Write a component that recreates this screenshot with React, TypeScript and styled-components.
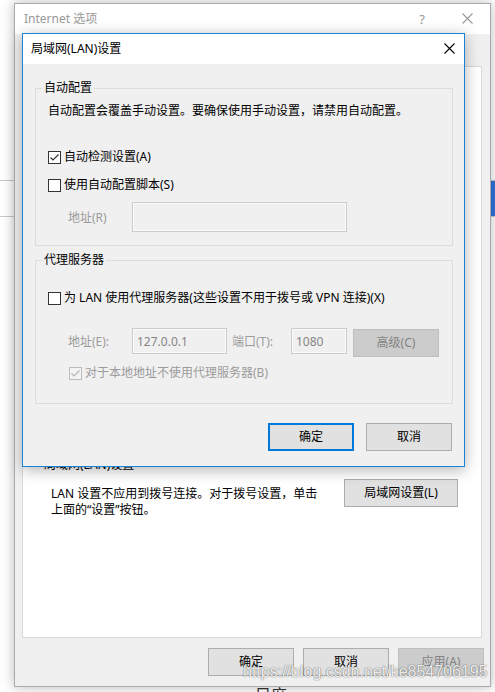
import styled, { createGlobalStyle } from 'styled-components';

const GlobalStyle = createGlobalStyle`
  html, body {
    margin: 0;
    padding: 0;
    background: #fff;
  }
  body {
    width: 495px;
    height: 692px;
    overflow: hidden;
    font-family: "Noto Sans", "Noto Sans CJK SC", sans-serif;
    font-size: 12px;
    color: #000;
  }
  * {
    box-sizing: border-box;
  }
`;

const Page = styled.div`
  position: relative;
  width: 495px;
  height: 692px;
  overflow: hidden;
  background: #fff;
`;

/* the web page behind the windows */
const BackdropBand = styled.div`
  margin-top: 180px;
  height: 37px;
  border-top: 1px solid #c8c8c8;
  border-bottom: 1px solid #c8c8c8;
  display: flex;
  justify-content: flex-end;
`;

const BackdropTab = styled.div`
  width: 5px;
  background: #2f72dc;
`;

const BackdropText = styled.div`
  margin: 468px 0 0 255px;
  font-size: 16px;
  line-height: 20px;
  color: #333;
`;

/* Internet options window */
const Window = styled.div`
  position: absolute;
  left: 14px;
  top: 3px;
  width: 477px;
  height: 684px;
  border: 1px solid #aaaaaa;
  background: #f0f0f0;
  box-shadow: 0 0 12px rgba(0, 0, 0, 0.28);
  display: flex;
  flex-direction: column;
`;

const WindowTitleBar = styled.div`
  height: 30px;
  flex: none;
  background: #fff;
  display: flex;
  align-items: center;
  padding: 0 17px 1px 9px;
  color: #999;
`;

const WindowTitle = styled.div`
  flex: 1;
  line-height: 16px;
`;

const HelpGlyph = styled.span`
  margin-right: 37px;
  font-size: 13px;
  line-height: 16px;
  color: #999;
`;

const WindowBody = styled.div`
  flex: 1;
  display: flex;
  flex-direction: column;
  padding: 0 8px 0 7px;
`;

const TabStrip = styled.div`
  height: 32px;
  flex: none;
`;

const TabPanel = styled.div`
  height: 572px;
  flex: none;
  background: #fff;
  border: 1px solid #d9d9d9;
  display: flex;
  flex-direction: column;
`;

const LanHeading = styled.div`
  margin: 390px 0 0 21px;
  line-height: 16px;
`;

const LanRow = styled.div`
  margin-top: 6px;
  padding: 0 23px 0 28px;
  display: flex;
  justify-content: space-between;
  align-items: flex-start;
`;

const LanText = styled.div`
  margin-top: 7px;
  line-height: 16px;
`;

const WindowFooter = styled.div`
  margin: 10px -2px 0 0;
  display: flex;
  justify-content: flex-end;
  gap: 9px;
`;

/* LAN settings dialog */
const Dialog = styled.div`
  position: absolute;
  left: 7px;
  top: 29px;
  width: 443px;
  border: 1px solid #1883d7;
  background: #f0f0f0;
  box-shadow: 0 3px 14px rgba(0, 0, 0, 0.3);
`;

const DialogTitleBar = styled.div`
  height: 30px;
  background: #fff;
  display: flex;
  align-items: center;
  justify-content: space-between;
  padding: 0 9px 1px 8px;
  line-height: 16px;
`;

const DialogBody = styled.div`
  padding: 16px 11px 15px 12px;
`;

const Group = styled.fieldset<{ $bottom: number; $top?: number }>`
  margin: ${(p) => p.$top ?? 0}px 0 0;
  padding: 0 12px ${(p) => p.$bottom}px;
  border: 1px solid #dcdcdc;
  min-width: 0;
`;

const GroupLegend = styled.legend`
  padding: 0 2px;
  margin-left: -6px;
  line-height: 16px;
`;

const Description = styled.div`
  margin-top: 6px;
  line-height: 18px;
`;

const CheckRow = styled.div<{ $top: number; $indent?: number; $disabled?: boolean }>`
  margin-top: ${(p) => p.$top}px;
  padding-left: ${(p) => p.$indent ?? 0}px;
  height: 18px;
  display: flex;
  align-items: center;
  gap: 3px;
  color: ${(p) => (p.$disabled ? '#9b9b9b' : '#000')};
  line-height: 18px;
`;

const Box = styled.span<{ $disabled?: boolean }>`
  width: 13px;
  height: 13px;
  flex: none;
  border: 1px solid ${(p) => (p.$disabled ? '#bcbcbc' : '#333')};
  background: ${(p) => (p.$disabled ? '#f3f3f3' : '#fff')};
  display: flex;
  align-items: center;
  justify-content: center;
`;

const FieldRow = styled.div<{ $top: number }>`
  margin-top: ${(p) => p.$top}px;
  padding-left: 20px;
  display: flex;
  align-items: flex-start;
`;

const FieldLabel = styled.span<{ $width: number; $gap?: number; $height: number }>`
  width: ${(p) => p.$width}px;
  margin-left: ${(p) => p.$gap ?? 0}px;
  height: ${(p) => p.$height}px;
  display: flex;
  align-items: center;
  color: #9b9b9b;
  flex: none;
`;

const TextBox = styled.div<{ $width: number; $height: number }>`
  width: ${(p) => p.$width}px;
  height: ${(p) => p.$height}px;
  flex: none;
  border: 1px solid #cccccc;
  box-shadow: inset 0 0 0 1px #fafafa;
  background: #f0f0f0;
  padding: 0 4px;
  display: flex;
  align-items: center;
  color: #858585;
`;

const ButtonRow = styled.div`
  margin-top: 19px;
  padding-right: 1px;
  display: flex;
  justify-content: flex-end;
  gap: 12px;
`;

const Button = styled.button<{ $primary?: boolean; $width?: number; $gap?: number; $nudge?: number }>`
  width: ${(p) => p.$width ?? 86}px;
  height: 28px;
  flex: none;
  margin: ${(p) => p.$nudge ?? 0}px 0 0 ${(p) => p.$gap ?? 0}px;
  padding: 0;
  font: inherit;
  line-height: 16px;
  color: #000;
  background: #e1e1e1;
  border: ${(p) => (p.$primary ? '2px solid #0078d7' : '1px solid #adadad')};
  &:disabled {
    background: #cccccc;
    border-color: #bfbfbf;
    color: #838383;
  }
`;

const Watermark = styled.div`
  position: absolute;
  left: 243px;
  top: 662px;
  font-family: "Liberation Sans", Arial, sans-serif;
  font-size: 16px;
  line-height: 20px;
  color: rgba(255, 255, 255, 0.9);
  text-shadow: 0 0 1px rgba(0, 0, 0, 0.55), 0 0 2px rgba(0, 0, 0, 0.25);
  pointer-events: none;
`;

function CloseIcon({ color }: { color: string }) {
  return (
    <svg width="11" height="11" viewBox="0 0 11 11">
      <path d="M0.5 0.5 L10.5 10.5 M10.5 0.5 L0.5 10.5" stroke={color} strokeWidth="1.1" fill="none" />
    </svg>
  );
}

function CheckBox({ checked, disabled }: { checked?: boolean; disabled?: boolean }) {
  return (
    <Box $disabled={disabled}>
      {checked && (
        <svg width="11" height="11" viewBox="0 0 11 11">
          <path
            d="M1.5 5.5 L4 8 L9.5 2.5"
            stroke={disabled ? '#b5b5b5' : '#333'}
            strokeWidth="1.2"
            fill="none"
          />
        </svg>
      )}
    </Box>
  );
}

export default function App() {
  return (
    <>
      <GlobalStyle />
      <Page>
        <BackdropBand>
          <BackdropTab />
        </BackdropBand>
        <BackdropText>目度</BackdropText>

        <Window>
          <WindowTitleBar>
            <WindowTitle>Internet 选项</WindowTitle>
            <HelpGlyph>?</HelpGlyph>
            <CloseIcon color="#999" />
          </WindowTitleBar>
          <WindowBody>
            <TabStrip />
            <TabPanel>
              <LanHeading>局域网(LAN)设置</LanHeading>
              <LanRow>
                <LanText>
                  LAN 设置不应用到拨号连接。对于拨号设置，单击
                  <br />
                  上面的“设置”按钮。
                </LanText>
                <Button $width={114}>局域网设置(L)</Button>
              </LanRow>
            </TabPanel>
            <WindowFooter>
              <Button>确定</Button>
              <Button>取消</Button>
              <Button disabled>应用(A)</Button>
            </WindowFooter>
          </WindowBody>

          <Dialog>
            <DialogTitleBar>
              <span>局域网(LAN)设置</span>
              <CloseIcon color="#000" />
            </DialogTitleBar>
            <DialogBody>
              <Group $bottom={13}>
                <GroupLegend>自动配置</GroupLegend>
                <Description>自动配置会覆盖手动设置。要确保使用手动设置，请禁用自动配置。</Description>
                <CheckRow $top={28}>
                  <CheckBox checked />
                  自动检测设置(A)
                </CheckRow>
                <CheckRow $top={10}>
                  <CheckBox />
                  使用自动配置脚本(S)
                </CheckRow>
                <FieldRow $top={8}>
                  <FieldLabel $width={64} $height={30}>地址(R)</FieldLabel>
                  <TextBox $width={215} $height={30} />
                </FieldRow>
              </Group>

              <Group $bottom={21} $top={6}>
                <GroupLegend>代理服务器</GroupLegend>
                <CheckRow $top={21}>
                  <CheckBox />
                  为 LAN 使用代理服务器(这些设置不用于拨号或 VPN 连接)(X)
                </CheckRow>
                <FieldRow $top={21}>
                  <FieldLabel $width={64} $height={26}>地址(E):</FieldLabel>
                  <TextBox $width={95} $height={26}>127.0.0.1</TextBox>
                  <FieldLabel $width={59} $gap={5} $height={26}>端口(T):</FieldLabel>
                  <TextBox $width={56} $height={26}>1080</TextBox>
                  <Button disabled $gap={6} $nudge={1}>高级(C)</Button>
                </FieldRow>
                <CheckRow $top={7} $indent={21} $disabled>
                  <CheckBox checked disabled />
                  对于本地地址不使用代理服务器(B)
                </CheckRow>
              </Group>

              <ButtonRow>
                <Button $primary>确定</Button>
                <Button>取消</Button>
              </ButtonRow>
            </DialogBody>
          </Dialog>
        </Window>

        <Watermark>https://blog.csdn.net/ke854706195</Watermark>
      </Page>
    </>
  );
}
